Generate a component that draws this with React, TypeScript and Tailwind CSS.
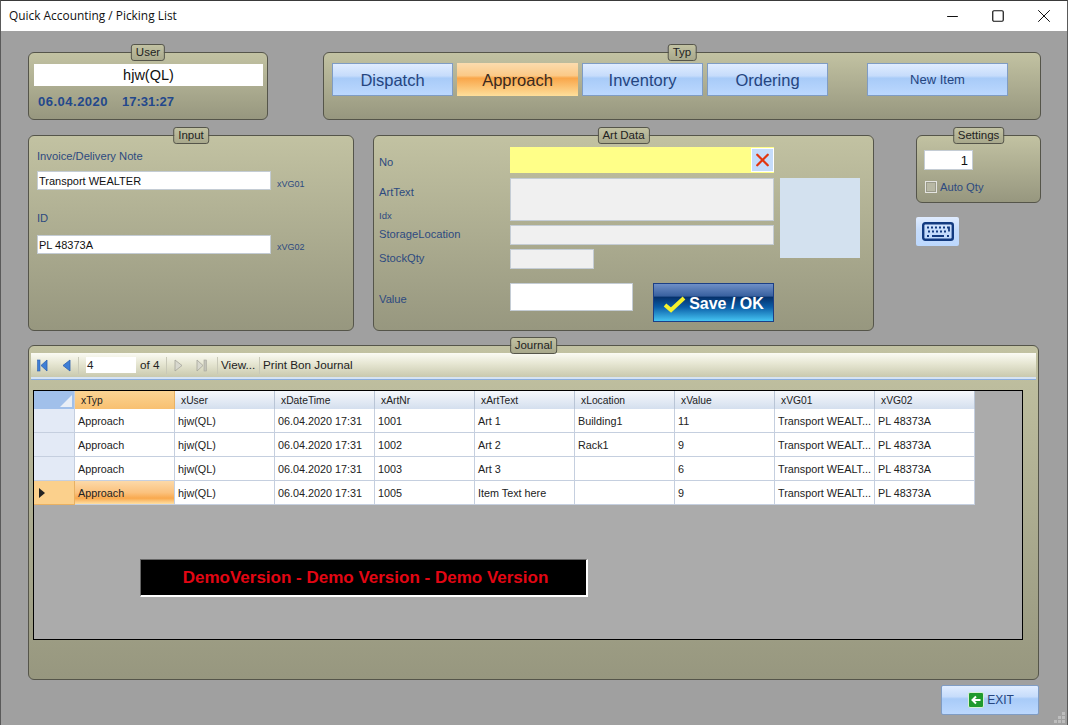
import { ReactNode } from 'react';
import { Minus, Square, X } from 'lucide-react';

const SANS = "font-['Liberation_Sans',Arial,sans-serif]";

const COLUMNS = ['xTyp', 'xUser', 'xDateTime', 'xArtNr', 'xArtText', 'xLocation', 'xValue', 'xVG01', 'xVG02'];

const ROWS = [
  ['Approach', 'hjw(QL)', '06.04.2020 17:31', '1001', 'Art 1', 'Building1', '11', 'Transport WEALT...', 'PL 48373A'],
  ['Approach', 'hjw(QL)', '06.04.2020 17:31', '1002', 'Art 2', 'Rack1', '9', 'Transport WEALT...', 'PL 48373A'],
  ['Approach', 'hjw(QL)', '06.04.2020 17:31', '1003', 'Art 3', '', '6', 'Transport WEALT...', 'PL 48373A'],
  ['Approach', 'hjw(QL)', '06.04.2020 17:31', '1005', 'Item Text here', '', '9', 'Transport WEALT...', 'PL 48373A'],
];

const BLUE_BTN =
  'bg-[linear-gradient(180deg,#e0ecff_0%,#c6dcfb_38%,#a8cbf8_46%,#bcd8fe_100%)] border border-[#7f9cc4] text-[#25457f]';
const ORANGE_BTN =
  'bg-[linear-gradient(180deg,#fbdcae_0%,#fbc987_38%,#f9a64a_46%,#fedf9b_100%)] text-[#3a2a20]';

function Panel({ title, className, children }: { title: string; className: string; children?: ReactNode }) {
  return (
    <section
      className={`relative rounded-[6px] border border-[#55554a] bg-[linear-gradient(180deg,#c2c2a2_0%,#97977f_100%)] ${className}`}
    >
      <span className="absolute -top-[9px] left-1/2 -translate-x-1/2 whitespace-nowrap rounded-[3px] border border-[#55554a] bg-[linear-gradient(180deg,#c2c2a2,#a8a88c)] px-[4px] text-[11.5px] leading-[15px] text-[#222]">
        {title}
      </span>
      {children}
    </section>
  );
}

function TypButton({ label, active }: { label: string; active?: boolean }) {
  return (
    <button className={`h-[33px] w-[121px] pt-[1px] text-[16.5px] ${active ? ORANGE_BTN : BLUE_BTN}`}>{label}</button>
  );
}

function FieldLabel({ children, className = '' }: { children: ReactNode; className?: string }) {
  return <span className={`block text-[11.2px] leading-[14px] text-[#2d4a80] ${className}`}>{children}</span>;
}

function KeyboardIcon() {
  return (
    <svg width="32" height="19" viewBox="0 0 32 19" fill="none">
      <rect x="1.2" y="1.2" width="29.6" height="16.6" rx="2" stroke="#123a80" strokeWidth="2.4" />
      <path
        d="M5 5.5h2M9 5.5h2M13 5.5h2M17 5.5h2M21 5.5h2M25 5.5h2v4M6 9.5h2M10 9.5h2M14 9.5h2M18 9.5h2M22 9.5h2M5 14h2M10 14h12M25 14h2"
        stroke="#123a80"
        strokeWidth="1.8"
      />
    </svg>
  );
}

function NavIcon({ dir, bar, off }: { dir: 'left' | 'right'; bar?: boolean; off?: boolean }) {
  const fill = off ? '#c4c4ba' : '#3f7fd6';
  const stroke = off ? '#a5a59b' : '#2c5fae';
  return (
    <svg width="11" height="13" viewBox="0 0 11 13">
      {dir === 'left' ? (
        <path d={bar ? 'M10 1v11L4 6.5z' : 'M9 1v11L2 6.5z'} fill={fill} stroke={stroke} strokeWidth="0.8" />
      ) : (
        <path d={bar ? 'M1 1v11l6-5.5z' : 'M2 1v11l7-5.5z'} fill={off ? '#d8d8ce' : fill} stroke={stroke} strokeWidth="0.8" />
      )}
      {bar && (
        <rect x={dir === 'left' ? 0.5 : 8} y="1" width="2.5" height="11" fill={fill} stroke={stroke} strokeWidth="0.6" />
      )}
    </svg>
  );
}

function ToolSep() {
  return <span className="h-[17px] w-px bg-[#c9c9b8]" />;
}

function ResizeGrip() {
  return (
    <div className="absolute bottom-[2px] right-[2px] grid grid-cols-3 gap-[1px]">
      {[0, 0, 1, 0, 1, 1, 1, 1, 1].map((on, i) => (
        <span key={i} className={`h-[3px] w-[3px] ${on ? 'bg-[#bdbdbd]' : ''}`} />
      ))}
    </div>
  );
}

export default function App() {
  return (
    <div className={`relative flex h-[725px] w-[1068px] flex-col overflow-hidden border-x border-t border-x-[#5a5a5a] border-t-[#3a3a3a] bg-[#a0a0a0] ${SANS}`}>
      <header className="flex h-[30px] shrink-0 items-center bg-white pl-[8px] font-['Open_Sans',sans-serif] text-[11.9px] text-[#111]">
        <span className="flex-1">Quick Accounting / Picking List</span>
        <div className="flex items-center text-[#111]">
          <span className="flex w-[46px] justify-center"><Minus size={17} strokeWidth={1} absoluteStrokeWidth /></span>
          <span className="flex w-[46px] justify-center"><Square size={14} strokeWidth={1.2} absoluteStrokeWidth /></span>
          <span className="flex w-[46px] justify-center"><X size={22} strokeWidth={1} absoluteStrokeWidth /></span>
        </div>
      </header>

      <div className="flex shrink-0 pl-[27px] pt-[21px]">
        <Panel title="User" className="h-[68px] w-[240px] px-[5px] pt-[11px]">
          <div className="h-[22px] w-[229px] bg-white text-center text-[14.5px] leading-[22px] text-[#111]">hjw(QL)</div>
          <div className="mt-[8px] flex pl-[4px] text-[13px] font-bold leading-[16px] text-[#23488c]">
            <span className="w-[84px] tracking-[0.5px]">06.04.2020</span>
            <span>17:31:27</span>
          </div>
        </Panel>
        <Panel title="Typ" className="ml-[55px] flex h-[68px] w-[718px] items-start pl-[8px] pt-[10px]">
          <div className="flex gap-[4px]">
            <TypButton label="Dispatch" />
            <TypButton label="Approach" active />
            <TypButton label="Inventory" />
            <TypButton label="Ordering" />
          </div>
          <button className={`ml-[39px] h-[33px] w-[141px] pt-[1px] text-[13px] ${BLUE_BTN}`}>New Item</button>
        </Panel>
      </div>

      <div className="flex shrink-0 pl-[27px] pt-[15px]">
        <Panel title="Input" className="h-[196px] w-[326px] pl-[8px] pt-[13px]">
          <FieldLabel>Invoice/Delivery Note</FieldLabel>
          <div className="mt-[8px] flex items-end">
            <div className="h-[19px] w-[234px] border border-[#c4ccd4] bg-white pl-[1px] text-[11px] leading-[18px] text-[#111]">Transport WEALTER</div>
            <span className="ml-[6px] text-[9px] leading-[12px] text-[#2d4a80]">xVG01</span>
          </div>
          <FieldLabel className="mt-[21px]">ID</FieldLabel>
          <div className="mt-[10px] flex items-end">
            <div className="h-[19px] w-[234px] border border-[#c4ccd4] bg-white pl-[1px] text-[11px] leading-[18px] text-[#111]">PL 48373A</div>
            <span className="mb-[1px] ml-[6px] text-[9px] leading-[12px] text-[#2d4a80]">xVG02</span>
          </div>
        </Panel>

        <Panel title="Art Data" className="ml-[19px] h-[196px] w-[501px] pl-[5px] pt-[11px]">
          <div className="flex items-center">
            <FieldLabel className="mt-[3px] w-[131px]">No</FieldLabel>
            <div className="flex h-[26px] w-[264px] items-center justify-end bg-[#ffff88]">
              <span className="flex h-[24px] w-[23px] items-center justify-center border border-white bg-[#c5dcfa]">
                <X size={24} strokeWidth={2.6} absoluteStrokeWidth className="text-[#e2360f]" />
              </span>
            </div>
          </div>
          <div className="mt-[5px] flex">
            <div className="w-[395px]">
              <div className="flex">
                <div className="flex w-[131px] flex-col justify-between">
                  <FieldLabel className="mt-[7px]">ArtText</FieldLabel>
                  <span className="text-[9.5px] leading-[11px] text-[#2d4a80]">Idx</span>
                </div>
                <div className="h-[43px] w-[264px] border border-[#c4ccd4] bg-[#f0f0f0]" />
              </div>
              <div className="mt-[4px] flex items-center">
                <FieldLabel className="mb-[3px] w-[131px]">StorageLocation</FieldLabel>
                <div className="h-[20px] w-[264px] border border-[#c4ccd4] bg-[#f0f0f0]" />
              </div>
              <div className="mt-[4px] flex items-center">
                <FieldLabel className="mb-[3px] w-[131px]">StockQty</FieldLabel>
                <div className="h-[20px] w-[84px] border border-[#c4ccd4] bg-[#f0f0f0]" />
              </div>
            </div>
            <div className="ml-[6px] h-[80px] w-[80px] bg-[#d3e1ef]" />
          </div>
          <div className="mt-[14px] flex items-start">
            <FieldLabel className="mt-[9px] w-[131px]">Value</FieldLabel>
            <div className="h-[28px] w-[123px] border border-[#c4ccd4] bg-white" />
            <button className="ml-[20px] flex h-[39px] w-[121px] items-center justify-center gap-[3px] border border-[#1c3f86] bg-[linear-gradient(180deg,#6f8fc6_0%,#38609f_33%,#05306a_35%,#0a5ca6_62%,#45c4f2_100%)] pt-[2px] text-[16px] font-bold text-white">
              <svg width="23" height="18" viewBox="0 0 23 18" fill="none">
                <path d="M2 10l6 5L21 3" stroke="#f5f22e" strokeWidth="4" />
              </svg>
              Save / OK
            </button>
          </div>
        </Panel>

        <div className="ml-[42px] flex flex-col">
          <Panel title="Settings" className="h-[68px] w-[125px] pl-[7px] pt-[14px]">
            <div className="h-[20px] w-[49px] border border-[#c4ccd4] bg-white pr-[4px] text-right text-[13px] leading-[19px] text-[#111]">1</div>
            <div className="mt-[10px] flex items-center">
              <span className="ml-px h-[12px] w-[12px] border border-[#e4e4e0] bg-[#b8b8a4] shadow-[inset_0_0_0_1px_#9a9a8a]" />
              <span className="ml-[3px] text-[11.2px] leading-[14px] text-[#2d4a80]">Auto Qty</span>
            </div>
          </Panel>
          <button className="mt-[14px] flex h-[29px] w-[43px] items-center justify-center rounded-[2px] bg-[linear-gradient(180deg,#e0ecff_0%,#c6dcfb_45%,#bcd8fe_100%)]">
            <KeyboardIcon />
          </button>
        </div>
      </div>

      <div className="shrink-0 pl-[27px] pt-[14px]">
        <Panel title="Journal" className="h-[335px] w-[1011px] pt-[7px]">
          <div className="mx-[2px] flex h-[24px] items-center gap-[3px] bg-[linear-gradient(180deg,#fbfbf4_0%,#e6e6d2_45%,#c9c9ae_100%)] text-[11.7px] text-[#222]">
            <span className="ml-[6px] flex w-[20px]"><NavIcon dir="left" bar /></span>
            <span className="ml-[1px] flex w-[14px]"><NavIcon dir="left" /></span>
            <ToolSep />
            <span className="ml-[4px] h-[16px] w-[50px] bg-white pl-[1px] leading-[16px]">4</span>
            <span className="ml-[1px] w-[23px]">of 4</span>
            <ToolSep />
            <span className="ml-[3px] flex w-[20px]"><NavIcon dir="right" off /></span>
            <span className="flex w-[18px]"><NavIcon dir="right" bar off /></span>
            <ToolSep />
            <span className="w-[35px]">View...</span>
            <ToolSep />
            <span>Print Bon Journal</span>
          </div>
          <div className="mx-[2px] h-[3px] border-b border-[#8aaede] bg-[#d6e3f3]" />
          <div className="relative mx-[4px] mt-[10px] h-[250px] w-[990px] border border-black bg-[#ababab] text-[10.8px] text-[#222]">
            <div className="flex h-[18px]">
              <div className="relative h-full w-[41px] border-r border-[#c5cfdf] bg-[#a1c0ea]">
                <svg className="absolute bottom-[2px] right-[2px]" width="12" height="12" viewBox="0 0 12 12">
                  <path d="M12 0v12H0z" fill="#e8eef6" />
                </svg>
              </div>
              {COLUMNS.map((c, i) => (
                <div
                  key={c}
                  className={`h-full w-[100px] border-r pl-[6px] pt-[1px] text-[10.3px] leading-[18px] ${
                    i === 0
                      ? 'border-[#e8b163] bg-[linear-gradient(180deg,#fbd493,#f8c071)]'
                      : 'border-[#b9c5d6] bg-[linear-gradient(180deg,#f6f8fc,#d4dfee)]'
                  }`}
                >
                  {c}
                </div>
              ))}
            </div>
            {ROWS.map((row, r) => {
              const current = r === ROWS.length - 1;
              return (
                <div key={r} className="flex h-[24px]">
                  <div
                    className={`flex h-full w-[41px] items-center border-r border-b pl-[5px] ${
                      current ? 'border-[#e8b163] bg-[#fbd08c]' : 'border-[#c5cfdf] bg-[#e3eaf6]'
                    }`}
                  >
                    {current && (
                      <svg width="6" height="10" viewBox="0 0 6 10">
                        <path d="M0 0l6 5-6 5z" fill="#222" />
                      </svg>
                    )}
                  </div>
                  {row.map((cell, i) => (
                    <div
                      key={i}
                      className={`h-full w-[100px] overflow-hidden whitespace-nowrap border-r border-b border-[#c5cfdf] pl-[3px] pt-[1px] leading-[23px] ${
                        current && i === 0
                          ? 'bg-[linear-gradient(180deg,#fcd9a8_0%,#fbc27e_50%,#f9a94e_75%,#fee0a4_100%)]'
                          : 'bg-white'
                      }`}
                    >
                      {cell}
                    </div>
                  ))}
                </div>
              );
            })}
            <div className="absolute left-[106px] top-[168px] flex h-[38px] w-[448px] items-center justify-center border-r-2 border-b-2 border-white border-t border-l border-t-[#666] border-l-[#666] bg-black pl-[4px] text-[17px] font-bold text-[#e30613]">
              DemoVersion - Demo Version - Demo Version
            </div>
          </div>
        </Panel>
      </div>

      <div className="flex shrink-0 pl-[940px] pt-[5px]">
        <button className={`flex h-[30px] w-[98px] items-center justify-center gap-[3px] rounded-[2px] pl-[2px] text-[12px] ${BLUE_BTN}`}>
          <svg width="16" height="16" viewBox="0 0 16 16">
            <rect x="0.5" y="0.5" width="15" height="15" rx="1.5" fill="#1f9a2e" stroke="#d6f0d6" />
            <path d="M12.5 8H5M8 4.5L4.5 8 8 11.5" fill="none" stroke="#fff" strokeWidth="2" />
          </svg>
          EXIT
        </button>
      </div>
      <ResizeGrip />
    </div>
  );
}
